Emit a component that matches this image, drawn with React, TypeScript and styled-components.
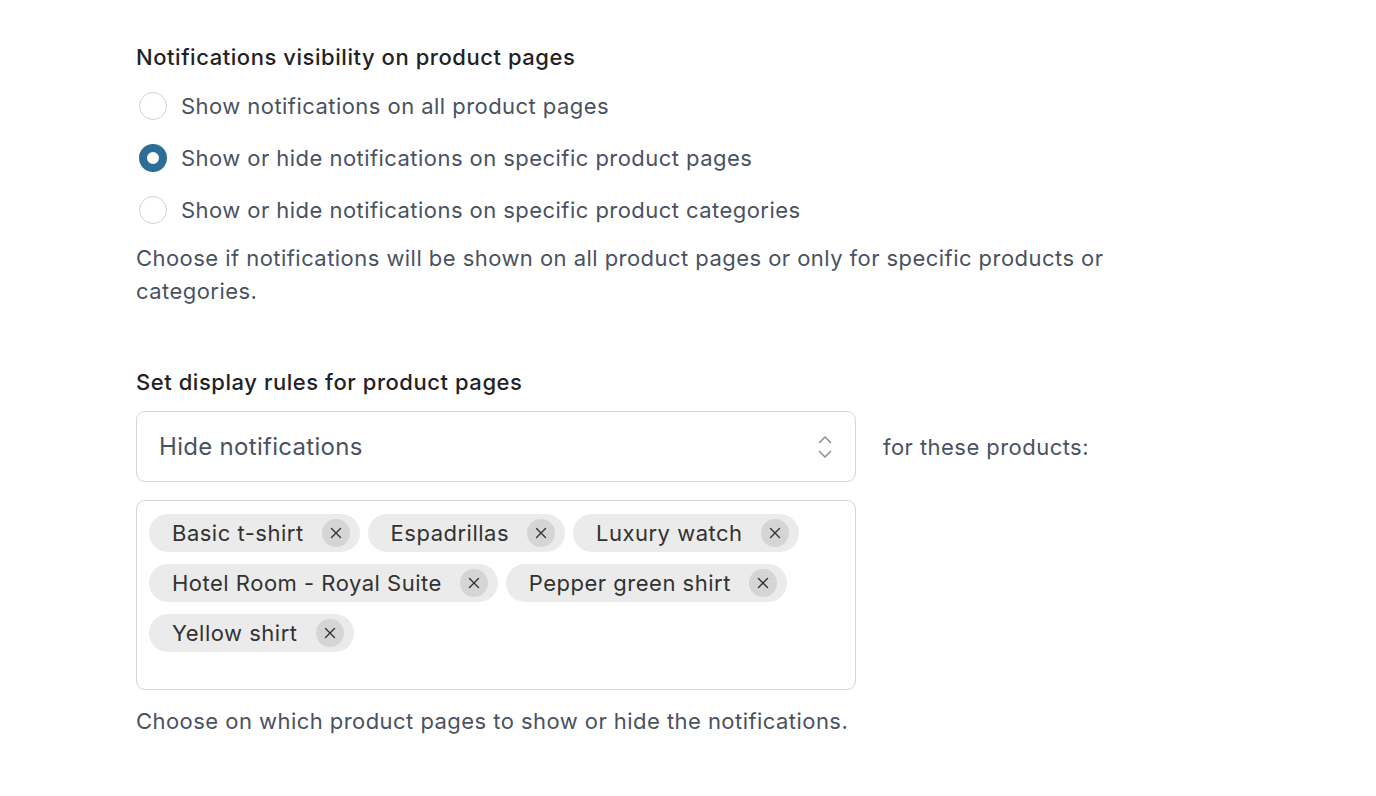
import React from 'react';
import styled, { createGlobalStyle } from 'styled-components';

const GlobalStyle = createGlobalStyle`
  body {
    margin: 0;
    background: #ffffff;
    font-family: Inter, "Liberation Sans", sans-serif;
    -webkit-font-smoothing: antialiased;
  }
`;

const Page = styled.div`
  padding: 40px 0 0 136px;
  width: 1040px;
`;

const Section = styled.section`
  margin-bottom: 57px;
`;

const Heading = styled.h3`
  margin: 0 0 6px;
  font-size: 22px;
  font-weight: 500;
  line-height: 34px;
  letter-spacing: 0.55px;
  color: #1f2328;
`;

const RadioList = styled.div`
  display: flex;
  flex-direction: column;
`;

const RadioRow = styled.label`
  display: flex;
  align-items: center;
  gap: 14px;
  height: 52px;
  margin-left: 3px;
  font-size: 22px;
  letter-spacing: 0.45px;
  color: #4a5262;
  cursor: pointer;
`;

const RadioDot = styled.span<{ $checked?: boolean }>`
  box-sizing: border-box;
  width: 28px;
  height: 28px;
  border-radius: 50%;
  flex-shrink: 0;
  border: ${(p) => (p.$checked ? '8.5px solid #2c6e97' : '1px solid #cfd2d6')};
  background: #fff;
`;

const Help = styled.p`
  margin: 6px 0 0;
  font-size: 22px;
  line-height: 33px;
  letter-spacing: 0.45px;
  color: #4a5262;
  max-width: 1000px;
`;

const RuleRow = styled.div`
  display: flex;
  align-items: center;
  gap: 27px;
  margin-top: 12px;
`;

const Select = styled.div`
  box-sizing: border-box;
  width: 720px;
  height: 71px;
  border: 1px solid #d3d6da;
  border-radius: 9px;
  display: flex;
  align-items: center;
  justify-content: space-between;
  padding: 0 22px;
  font-size: 24px;
  letter-spacing: 0.3px;
  color: #4a5262;
`;

const Suffix = styled.span`
  font-size: 22px;
  letter-spacing: 0.45px;
  color: #4a5262;
`;

const TagBox = styled.div`
  box-sizing: border-box;
  width: 720px;
  min-height: 190px;
  margin-top: 18px;
  border: 1px solid #d3d6da;
  border-radius: 9px;
  padding: 13px 12px;
  display: flex;
  flex-wrap: wrap;
  align-content: flex-start;
  gap: 12px 8px;
`;

const Tag = styled.span`
  display: inline-flex;
  align-items: center;
  height: 38px;
  padding: 0 10px 0 23px;
  border-radius: 19px;
  background: #ebebeb;
  font-size: 22px;
  letter-spacing: 0.5px;
  color: #323232;
  gap: 18px;
`;

const Remove = styled.span`
  width: 28px;
  height: 28px;
  flex-shrink: 0;
  border-radius: 50%;
  background: #d5d5d5;
  display: inline-flex;
  align-items: center;
  justify-content: center;
`;

const BottomHelp = styled(Help)`
  margin-top: 15px;
`;

const tags = [
  'Basic t-shirt',
  'Espadrillas',
  'Luxury watch',
  'Hotel Room - Royal Suite',
  'Pepper green shirt',
  'Yellow shirt',
];

const options = [
  { label: 'Show notifications on all product pages', checked: false },
  { label: 'Show or hide notifications on specific product pages', checked: true },
  { label: 'Show or hide notifications on specific product categories', checked: false },
];

const Cross = () => (
  <svg width="12" height="12" viewBox="0 0 12 12" fill="none">
    <path d="M1.5 1.5l9 9M10.5 1.5l-9 9" stroke="#333" strokeWidth="1.4" strokeLinecap="round" />
  </svg>
);

const UpDown = () => (
  <svg width="16" height="26" viewBox="0 0 16 26" fill="none">
    <path d="M2.5 8.5L8 3l5.5 5.5M2.5 17.5L8 23l5.5-5.5" stroke="#8a9099" strokeWidth="1.6" strokeLinecap="round" strokeLinejoin="round" />
  </svg>
);

export default function App() {
  return (
    <>
      <GlobalStyle />
      <Page>
        <Section>
          <Heading>Notifications visibility on product pages</Heading>
          <RadioList>
            {options.map((o) => (
              <RadioRow key={o.label}>
                <RadioDot $checked={o.checked} />
                {o.label}
              </RadioRow>
            ))}
          </RadioList>
          <Help>
            Choose if notifications will be shown on all product pages or only for specific products or
            categories.
          </Help>
        </Section>
        <Section>
          <Heading>Set display rules for product pages</Heading>
          <RuleRow>
            <Select>
              Hide notifications
              <UpDown />
            </Select>
            <Suffix>for these products:</Suffix>
          </RuleRow>
          <TagBox>
            {tags.map((t) => (
              <Tag key={t}>
                {t}
                <Remove>
                  <Cross />
                </Remove>
              </Tag>
            ))}
          </TagBox>
          <BottomHelp>Choose on which product pages to show or hide the notifications.</BottomHelp>
        </Section>
      </Page>
    </>
  );
}
